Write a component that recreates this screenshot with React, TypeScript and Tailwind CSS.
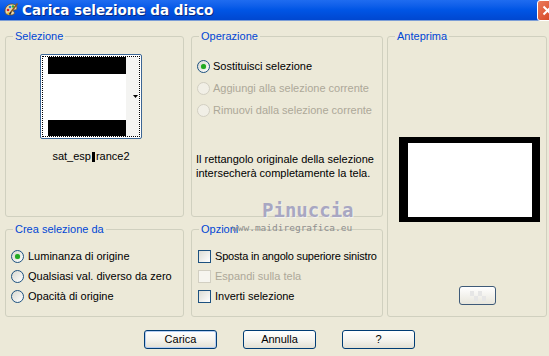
import React from 'react';

const Radio: React.FC<{ checked?: boolean; disabled?: boolean }> = ({ checked, disabled }) => (
  <span
    className={`w-[13px] h-[13px] shrink-0 rounded-full border flex items-center justify-center ${
      disabled ? 'border-[#d2cfc2] bg-[#f1efe6]' : 'border-[#1c5180] bg-gradient-to-br from-[#d8d8d0] to-white'
    }`}
  >
    {checked && <span className="w-[5px] h-[5px] rounded-full bg-[#22a822] shadow-[0_0_1px_#5fd35f]"></span>}
  </span>
);

const Check: React.FC<{ disabled?: boolean }> = ({ disabled }) => (
  <span
    className={`w-[13px] h-[13px] shrink-0 border ${
      disabled ? 'border-[#d2cfc2] bg-[#f6f5ef]' : 'border-[#1c5180] bg-gradient-to-br from-[#dcdcd5] to-white'
    }`}
  ></span>
);

const Group: React.FC<{ label: string; className?: string; children?: React.ReactNode }> = ({ label, className = '', children }) => (
  <div className={`relative border border-[#d0d0bf] rounded-[3px] ${className}`}>
    <span className="absolute -top-[7px] left-[7px] px-[2px] bg-[#ece9d8] text-[#0046d5] leading-[13px] whitespace-nowrap">{label}</span>
    {children}
  </div>
);

const Button: React.FC<{ label: string; primary?: boolean }> = ({ label, primary }) => (
  <div
    className={`w-[73px] h-[19px] rounded-[3px] border border-[#003c74] bg-gradient-to-b from-white via-[#f5f4ef] to-[#e3e0d4] flex items-center justify-center ${
      primary ? 'shadow-[inset_0_0_0_1px_#b5cdf2]' : ''
    }`}
  >
    {label}
  </div>
);

export default function App() {
  return (
    <div className="relative w-[549px] h-[356px] overflow-hidden bg-[#ece9d8] font-['Liberation_Sans',Arial,sans-serif] text-[11px] leading-[13px] text-black whitespace-nowrap">
      {/* title bar */}
      <div className="flex items-center h-[21px] border-b border-[#7d9ed6] bg-gradient-to-b from-[#1f6cf0] via-[#0055e5] to-[#0047d0]">
        <svg width="16" height="16" viewBox="0 0 16 16" className="ml-[3px] shrink-0">
          <path d="M2 9c0-4 3-7 7-7 3 0 5 2 5 4 0 2-2 2-3 2-1 0-1 1 0 2 1 1 0 3-3 3-4 0-6-1-6-4z" fill="#e9d9b0" stroke="#6b4a1c" strokeWidth="0.8" />
          <circle cx="5" cy="8" r="1.3" fill="#e02020" />
          <circle cx="7" cy="5" r="1.3" fill="#2080e0" />
          <circle cx="10" cy="4.5" r="1.2" fill="#20b030" />
          <circle cx="5.5" cy="11.5" r="1.2" fill="#f0c020" />
          <path d="M14.5 1.5L8 10" stroke="#8a5a20" strokeWidth="1.6" />
          <path d="M8 10l-1.5 2.5" stroke="#303030" strokeWidth="1.6" />
        </svg>
        <span className="ml-[3px] text-white font-['DejaVu_Sans',sans-serif] font-bold text-[13.5px] [text-shadow:1px_1px_0_#0a2a80]">Carica selezione da disco</span>
        <div className="ml-auto -mr-[9px] mt-[1px] w-[21px] h-[21px] shrink-0 rounded-[3px] border border-white bg-gradient-to-br from-[#ea7a5a] to-[#d23c14] flex items-center justify-center">
          <svg width="11" height="11" viewBox="0 0 11 11">
            <path d="M1.5 1.5l8 8M9.5 1.5l-8 8" stroke="white" strokeWidth="2" />
          </svg>
        </div>
      </div>

      <div className="flex pl-[5px] pt-[15px]">
        <div className="grid grid-cols-[179px_192px] grid-rows-[181px_88px] gap-x-[7px] gap-y-[12px]">
          <Group label="Selezione">
            <div className="flex flex-col items-start pl-[34px] pt-[17px]">
              <div className="w-[102px] h-[85px] rounded-[2px] border border-[#3b6594] bg-white p-[1px]">
                <div className="h-full border border-dotted border-black flex">
                  <div className="ml-[5px] w-[78px] flex flex-col">
                    <div className="h-[17px] bg-black"></div>
                    <div className="h-[46px] bg-white"></div>
                    <div className="h-[16px] bg-black"></div>
                  </div>
                  <div className="flex-1 bg-[#f4f4f2] flex items-center justify-end pr-[1px]">
                    <svg width="5" height="3" viewBox="0 0 5 3">
                      <path d="M0 0h5L2.5 3z" fill="black" />
                    </svg>
                  </div>
                </div>
              </div>
              <div className="mt-[11px] w-[102px] text-center flex justify-center items-center">
                sat_esp<span className="inline-block w-[3px] h-[10px] bg-black mx-[1px]"></span>rance2
              </div>
            </div>
          </Group>

          <Group label="Operazione">
            <div className="pl-[5px] pt-[18px]">
              <div className="h-[22px] flex items-center gap-[3px]">
                <Radio checked />
                <span>Sostituisci selezione</span>
              </div>
              <div className="h-[22px] flex items-center gap-[3px] text-[#aca899]">
                <Radio disabled />
                <span>Aggiungi alla selezione corrente</span>
              </div>
              <div className="h-[22px] flex items-center gap-[3px] text-[#aca899]">
                <Radio disabled />
                <span>Rimuovi dalla selezione corrente</span>
              </div>
              <p className="mt-[31px] -ml-[1px] leading-[14px]">
                Il rettangolo originale della selezione
                <br />
                intersecherà completamente la tela.
              </p>
            </div>
          </Group>

          <Group label="Crea selezione da">
            <div className="pl-[5px] pt-[16px]">
              <div className="h-[20px] flex items-center gap-[4px]">
                <Radio checked />
                <span>Luminanza di origine</span>
              </div>
              <div className="h-[20px] flex items-center gap-[4px]">
                <Radio />
                <span>Qualsiasi val. diverso da zero</span>
              </div>
              <div className="h-[20px] flex items-center gap-[4px]">
                <Radio />
                <span>Opacità di origine</span>
              </div>
            </div>
          </Group>

          <Group label="Opzioni">
            <div className="pl-[6px] pt-[16px]">
              <div className="h-[20px] flex items-center gap-[4px]">
                <Check />
                <span className="tracking-[-0.2px]">Sposta in angolo superiore sinistro</span>
              </div>
              <div className="h-[20px] flex items-center gap-[4px] text-[#aca899]">
                <Check disabled />
                <span>Espandi sulla tela</span>
              </div>
              <div className="h-[20px] flex items-center gap-[4px]">
                <Check />
                <span>Inverti selezione</span>
              </div>
            </div>
          </Group>
        </div>

        <Group label="Anteprima" className="ml-[4px] w-[160px] h-[281px]">
          <div className="flex flex-col items-start pl-[11px] pt-[100px]">
            <div className="w-[141px] h-[85px] border-l-[9px] border-t-[6px] border-r-[8px] border-b-[5px] border-black bg-white"></div>
            <div className="mt-[64px] ml-[60px] w-[37px] h-[19px] rounded-[3px] border border-[#3e5a78] bg-gradient-to-b from-white to-[#e8e6dc] flex items-center justify-center">
              <svg width="20" height="10" viewBox="0 0 20 10">
                <rect x="2" y="0" width="4" height="5" fill="#e6e6e6" />
                <rect x="10" y="0" width="4" height="5" fill="#e6e6e6" />
                <rect x="6" y="5" width="4" height="5" fill="#e6e6e6" />
                <rect x="14" y="5" width="4" height="5" fill="#e6e6e6" />
              </svg>
            </div>
          </div>
        </Group>
      </div>

      <div className="flex pl-[144px] gap-[26px] mt-[13px]">
        <Button label="Carica" primary />
        <Button label="Annulla" />
        <Button label="?" />
      </div>

      {/* watermark */}
      <span className="absolute left-[262px] top-[199px] font-['DejaVu_Sans_Mono',monospace] font-bold text-[19px] leading-[22px] text-[#a8a7c2] [text-shadow:1px_1px_0_#f4f3ee]">
        Pinuccia
      </span>
      <span className="absolute left-[232px] top-[222px] font-['DejaVu_Sans_Mono',monospace] text-[9.5px] leading-[11px] text-[#8e8e8e]">
        www.maidiregrafica.eu
      </span>
    </div>
  );
}
